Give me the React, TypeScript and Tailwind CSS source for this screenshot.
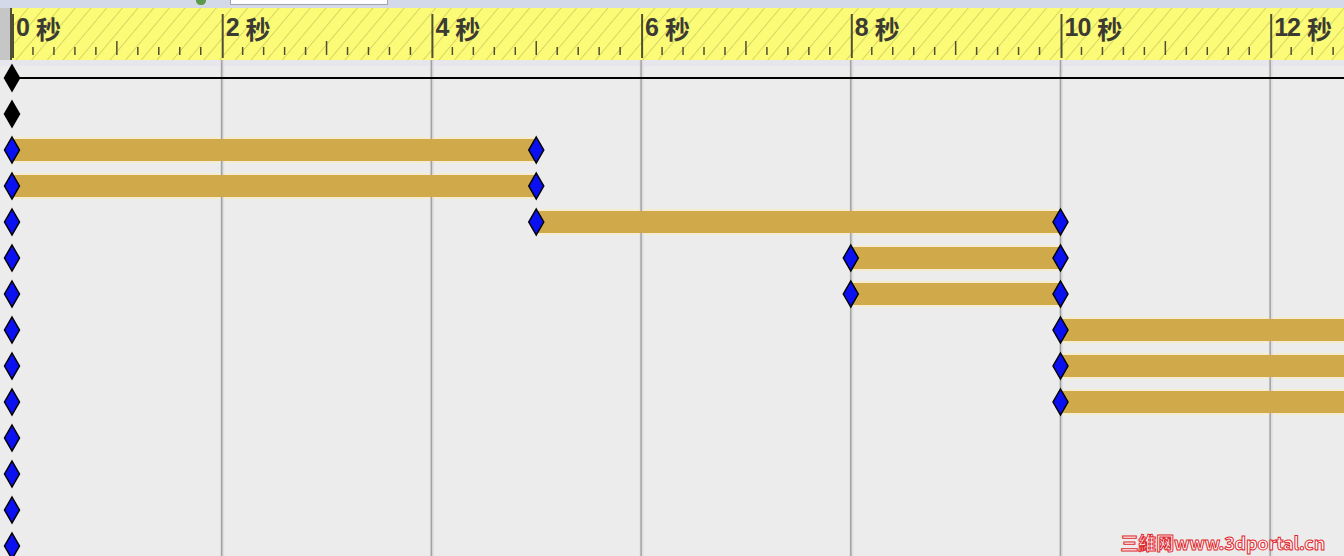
import React from "react";

const PX = 104.85;
const X0 = 12;
const xs = (s: number) => X0 + s * PX;
const rowY = (i: number) => 78 + i * 36;

// bars: [row, from, to] in seconds
const bars: [number, number, number][] = [
  [2, 0, 5],
  [3, 0, 5],
  [4, 5, 10],
  [5, 8, 10],
  [6, 8, 10],
  [7, 10, 14],
  [8, 10, 14],
  [9, 10, 14],
];

// extra keys besides the column at 0
const keys: [number, number][] = [
  [2, 5],
  [3, 5],
  [4, 5],
  [4, 10],
  [5, 8],
  [5, 10],
  [6, 8],
  [6, 10],
  [7, 10],
  [8, 10],
  [9, 10],
];

function Diamond({ cx, cy, black }: { cx: number; cy: number; black?: boolean }) {
  return (
    <polygon
      points={`${cx},${cy - 13} ${cx + 7.5},${cy} ${cx},${cy + 13} ${cx - 7.5},${cy}`}
      fill={black ? "#000000" : "#0a10f0"}
      stroke="#000000"
      strokeWidth="1.5"
    />
  );
}

function Ruler() {
  const minors: number[] = [];
  for (let i = 0; i <= 70; i++) minors.push(i);
  return (
    <svg width="1332" height="52" className="block">
      <defs>
        <pattern id="hatch" width="12" height="12" patternUnits="userSpaceOnUse" patternTransform="rotate(40)">
          <line x1="0" y1="0" x2="0" y2="12" stroke="#bdbd50" strokeWidth="1.2" />
        </pattern>
      </defs>
      <rect x="0" y="0" width="1332" height="52" fill="#fbfb78" />
      <rect x="0" y="0" width="1332" height="52" fill="url(#hatch)" />
      {minors.map((i) => {
        const x = xs(i * 0.2) - 12;
        if (i % 10 === 0) {
          return <line key={i} x1={x + 1} y1="6" x2={x + 1} y2="50" stroke="#4f4f36" strokeWidth="2" />;
        }
        const long = i % 5 === 0;
        return (
          <line key={i} x1={x} y1={long ? 33 : 39} x2={x} y2="47" stroke="#4f4f36" strokeWidth="1.5" />
        );
      })}
      {[0, 2, 4, 6, 8, 10, 12].map((s) => (
        <text
          key={s}
          x={xs(s) - 12 + 4}
          y="28"
          fontSize="25"
          fontWeight="700"
          fill="#3b3b33"
          letterSpacing="-1"
          style={{ fontFamily: '"Liberation Sans Narrow", "Liberation Sans", "Noto Sans CJK SC", sans-serif' }}
        >
          {s}
          <tspan fontSize="25" dx="7" dy="3" style={{ fontFamily: '"Noto Sans CJK SC", sans-serif' }}>
            秒
          </tspan>
        </text>
      ))}
    </svg>
  );
}

function Timeline() {
  const grid = [2, 4, 6, 8, 10, 12];
  return (
    <svg width="1344" height="496" className="block">
      <rect x="0" y="0" width="1344" height="496" fill="#ececec" />
      <rect x="0" y="0" width="1344" height="6" fill="#e6e6ec" />
      {bars.map(([r, a, b], i) => {
        const y = rowY(r) - 60;
        return <rect key={i} x={xs(a)} y={y - 13} width={xs(b) - xs(a)} height="26" fill="#f6ecd0" />;
      })}
      {grid.map((s) => (
        <g key={s}>
          <rect x={xs(s) - 1.5} y="0" width="4" height="496" fill="#dcdcdc" opacity="0.8" />
          <line x1={xs(s)} y1="0" x2={xs(s)} y2="496" stroke="#a3a3a3" strokeWidth="1.5" />
        </g>
      ))}
      <line x1="12" y1={rowY(0) - 60} x2="1344" y2={rowY(0) - 60} stroke="#000000" strokeWidth="1.8" />
      {bars.map(([r, a, b], i) => {
        const y = rowY(r) - 60;
        return <rect key={i} x={xs(a)} y={y - 11} width={xs(b) - xs(a)} height="22" fill="#cfa94a" />;
      })}
      {Array.from({ length: 14 }).map((_, i) => (
        <Diamond key={i} cx={12} cy={rowY(i) - 60} black={i < 2} />
      ))}
      {keys.map(([r, s], i) => (
        <Diamond key={i} cx={xs(s)} cy={rowY(r) - 60} />
      ))}
    </svg>
  );
}

export default function App() {
  return (
    <div className="relative w-[1344px] h-[556px] overflow-hidden bg-[#ececec] flex flex-col">
      <div className="h-2 shrink-0 bg-[#d3d9e8] flex items-start">
        <div className="ml-[196px] mt-[-4px] w-[10px] h-[9px] rounded-full bg-[#5a9a4a]" />
        <div className="ml-[24px] w-[158px] h-[5px] bg-white border border-t-0 border-[#a0a4ac]" />
      </div>
      <div className="h-[52px] shrink-0 flex">
        <div className="w-[12px] h-full bg-[#c6c6c6] border-r-2 border-[#4f4f36]" />
        <Ruler />
      </div>
      <Timeline />
      <div
        className="absolute right-[19px] bottom-[5px] text-[18px] font-bold text-white leading-none tracking-[-0.2px] [-webkit-text-stroke:1px_#e0282e]"
        style={{ fontFamily: '"Noto Sans CJK SC", "Liberation Sans", sans-serif' }}
      >
        三維网www.3dportal.cn
      </div>
    </div>
  );
}
